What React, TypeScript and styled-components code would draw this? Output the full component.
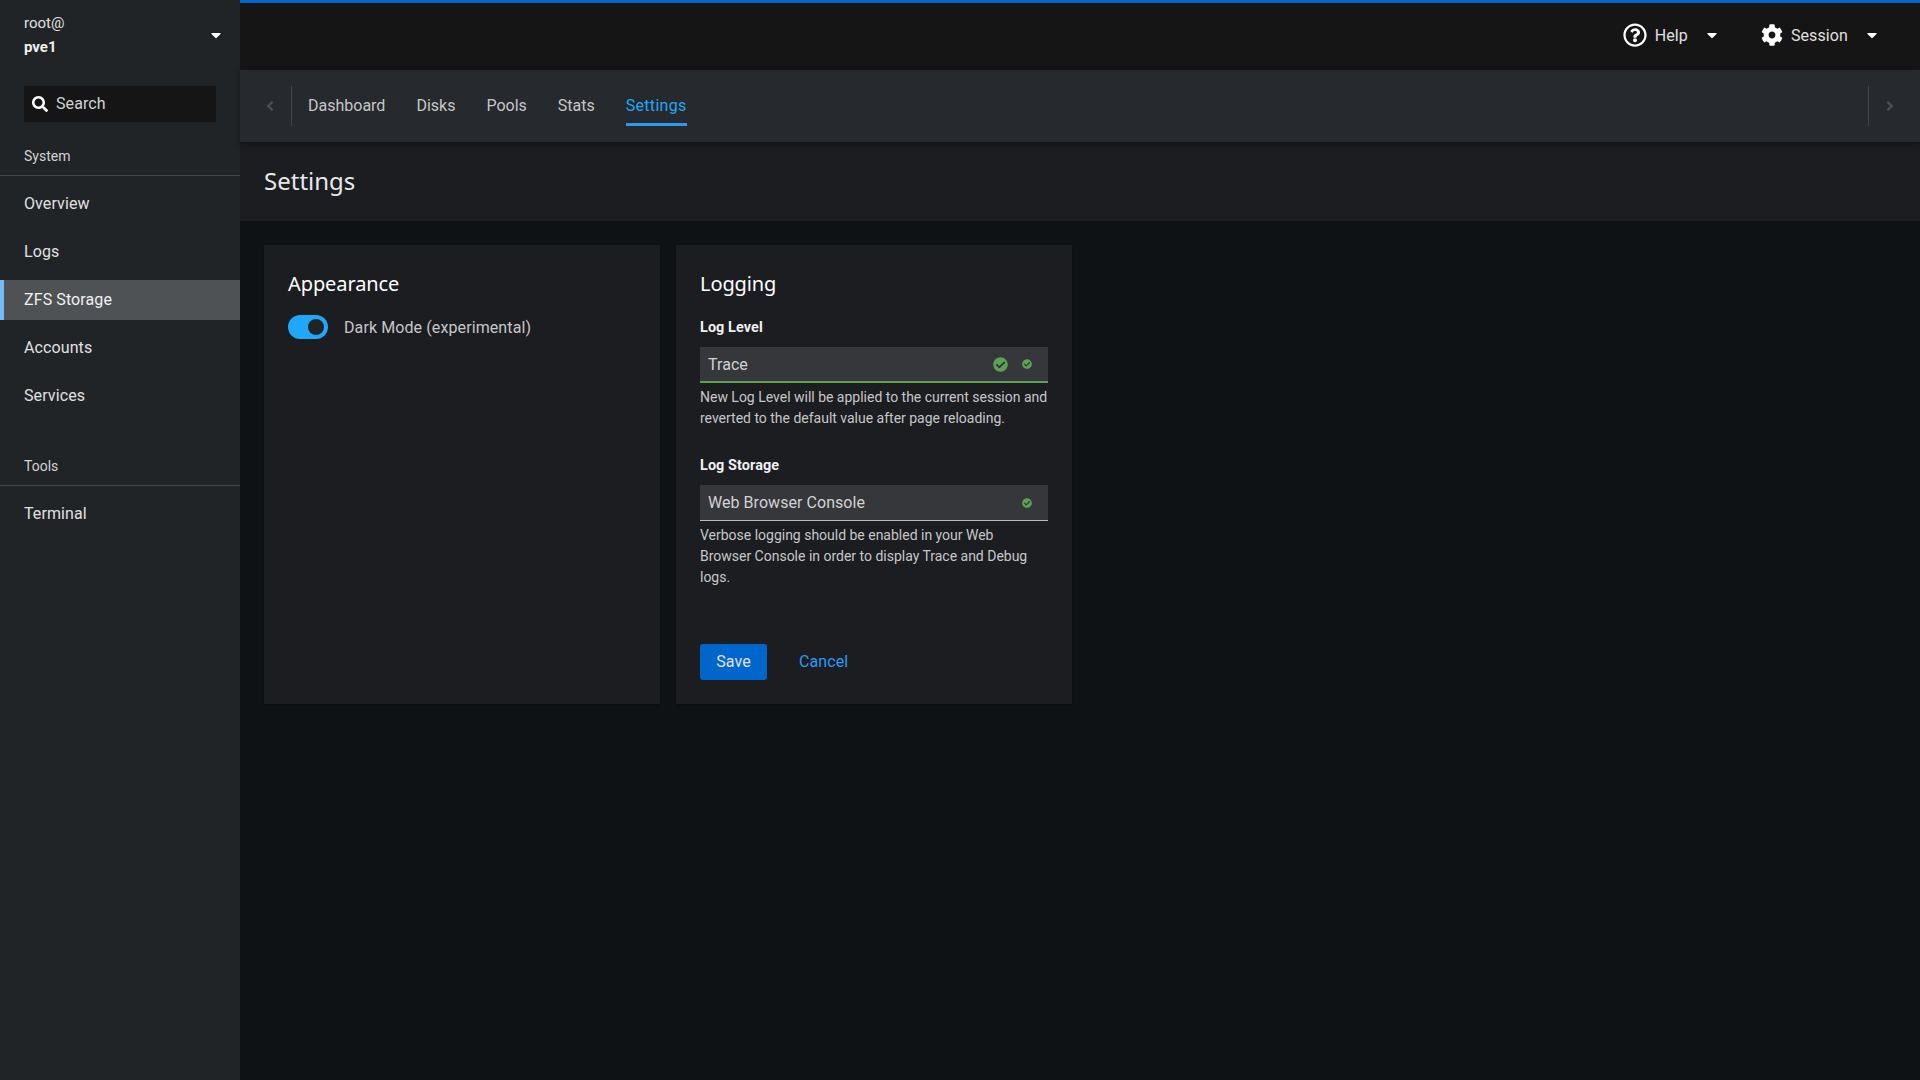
import React from "react";
import styled, { createGlobalStyle } from "styled-components";
import { FaCaretDown, FaCheckCircle, FaCog, FaRegQuestionCircle, FaSearch, FaAngleLeft, FaAngleRight } from "react-icons/fa";

const Global = createGlobalStyle`
  html, body { margin: 0; padding: 0; height: 100%; background: #0f1214; }
  * { box-sizing: border-box; }
  body { font-family: Roboto, "Noto Sans", sans-serif; font-size: 16px; color: #ccc; }
`;

const Page = styled.div`
  display: grid;
  grid-template-columns: 240px 1fr;
  width: 1920px;
  height: 1080px;
  overflow: hidden;
`;

const Sidebar = styled.aside`
  background: #212427;
  display: flex;
  flex-direction: column;
`;

const Host = styled.div`
  height: 70px;
  padding: 0 16px 0 24px;
  display: flex;
  align-items: flex-start;
  justify-content: space-between;
  color: #e0e0e0;
`;

const HostText = styled.div`
  display: flex;
  flex-direction: column;
  gap: 3px;
  padding-top: 13px;
  font-size: 15px;
  line-height: 21px;
  b { font-weight: 700; color: #f0f0f0; }
`;

const CaretBox = styled.span`
  display: inline-flex;
  color: #fff;
  font-size: 16px;
  margin-top: 27px;
`;

const Search = styled.div`
  margin: 16px 24px 0;
  height: 36px;
  background: #151515;
  display: flex;
  align-items: center;
  gap: 8px;
  padding: 0 0 1px 8px;
  font-size: 16px;
  letter-spacing: 0.1px;
  color: #d2d2d2;
  svg { color: #fff; font-size: 16px; }
`;

const SectionTitle = styled.div<{ $first?: boolean }>`
  margin-top: ${(p) => (p.$first ? "24px" : "40px")};
  padding: 0 24px;
  height: 30px;
  font-size: 14px;
  line-height: 20px;
  border-bottom: 1px solid #444548;
  color: #d2d2d2;
`;

const NavList = styled.nav`
  display: flex;
  flex-direction: column;
  gap: 8px;
  padding-top: 8px;
`;

const NavItem = styled.div<{ $active?: boolean }>`
  height: 40px;
  padding: 0 0 2px ${(p) => (p.$active ? "20px" : "24px")};
  display: flex;
  align-items: center;
  font-size: 16px;
  letter-spacing: 0.1px;
  color: ${(p) => (p.$active ? "#f0f0f0" : "#e0e0e0")};
  background: ${(p) => (p.$active ? "#4f5255" : "transparent")};
  border-left: ${(p) => (p.$active ? "4px solid #73bcf7" : "0")};
`;

const Main = styled.main`
  display: flex;
  flex-direction: column;
  min-width: 0;
`;

const Header = styled.header`
  height: 70px;
  background: #151515;
  border-top: 3px solid #06c;
  display: flex;
  justify-content: flex-end;
  align-items: center;
  padding-bottom: 3px;
  padding-right: 40px;
  gap: 41px;
`;

const HeaderMenu = styled.div`
  display: flex;
  align-items: center;
  font-size: 16px;
  letter-spacing: 0.1px;
  color: #e0e0e0;
`;

const HeaderIcon = styled.span<{ $size: number }>`
  display: inline-flex;
  color: #fff;
  font-size: ${(p) => p.$size}px;
  margin-right: 8px;
`;

const HeaderCaret = styled.span`
  display: inline-flex;
  color: #fff;
  font-size: 16px;
  margin-left: 16px;
`;

const TabBar = styled.div`
  height: 72px;
  background: #26292d;
  display: flex;
  align-items: center;
  justify-content: space-between;
  box-shadow: 0 2px 6px rgba(0, 0, 0, 0.4);
  position: relative;
  z-index: 1;
`;

const Scroll = styled.div<{ $right?: boolean }>`
  width: 52px;
  height: 40px;
  display: flex;
  align-items: center;
  justify-content: center;
  color: #4a4d50;
  font-size: 16px;
  ${(p) =>
    p.$right
      ? "border-left: 1px solid #444548; padding-right: 10px;"
      : "border-right: 1px solid #444548; padding-left: 8px;"}
`;

const Tabs = styled.div`
  flex: 1;
  display: flex;
  align-items: stretch;
  height: 40px;
  gap: 31px;
  padding-left: 16px;
`;

const Tab = styled.div<{ $active?: boolean }>`
  display: flex;
  align-items: center;
  font-size: 16px;
  letter-spacing: ${(p) => (p.$active ? "0.3px" : "0")};
  color: ${(p) => (p.$active ? "#1fa7f8" : "#c7c7c7")};
  border-bottom: 3px solid ${(p) => (p.$active ? "#2b9af3" : "transparent")};
  padding-top: 2px;
`;

const TitleBar = styled.div`
  height: 79px;
  background: #1b1d21;
  padding: 0 24px 2px;
  display: flex;
  align-items: center;
`;

const PageTitle = styled.h1`
  margin: 0;
  font-family: "Noto Sans", sans-serif;
  font-size: 24px;
  font-weight: 400;
  color: #e8e8e8;
`;

const Content = styled.div`
  flex: 1;
  background: #0f1214;
  padding: 24px;
  display: flex;
  gap: 16px;
  align-items: flex-start;
`;

const Card = styled.section`
  width: 396px;
  height: 459px;
  background: #1b1d21;
  padding: 24px;
  display: flex;
  flex-direction: column;
  box-shadow: 0 1px 2px rgba(0, 0, 0, 0.3);
`;

const CardTitle = styled.h2`
  margin: 0;
  font-family: "Noto Sans", sans-serif;
  font-size: 20px;
  font-weight: 400;
  line-height: 30px;
  letter-spacing: -0.1px;
  color: #fff;
`;

const ToggleRow = styled.div`
  margin-top: 16px;
  display: flex;
  align-items: center;
  gap: 16px;
  font-size: 16px;
  letter-spacing: 0.1px;
  color: #c7c7c7;
`;

const Toggle = styled.span`
  width: 40px;
  height: 24px;
  border-radius: 12px;
  background: #1fa7f8;
  display: flex;
  align-items: center;
  justify-content: flex-end;
  padding-right: 4px;
  &::after {
    content: "";
    width: 16px;
    height: 16px;
    border-radius: 50%;
    background: #212427;
  }
`;

const Field = styled.div<{ $gap: number }>`
  margin-top: ${(p) => p.$gap}px;
  display: flex;
  flex-direction: column;
`;

const Label = styled.div`
  font-size: 14.4px;
  font-weight: 700;
  line-height: 21px;
  letter-spacing: 0.1px;
  color: #f0f0f0;
`;

const SelectBox = styled.div<{ $ok?: boolean }>`
  margin-top: 9px;
  height: 36px;
  background: #36373b;
  border-bottom: ${(p) => (p.$ok ? "2px solid #5ba352" : "1px solid #b8bbbe")};
  display: flex;
  align-items: center;
  padding: 0 16px 0 8px;
  font-size: 16px;
  letter-spacing: 0.05px;
  color: #d2d2d2;
`;

const SelectText = styled.span`
  flex: 1;
`;

const Status = styled.span<{ $big?: boolean }>`
  display: inline-flex;
  color: #5ba352;
  font-size: ${(p) => (p.$big ? "15px" : "10px")};
  margin-right: ${(p) => (p.$big ? "14px" : "0")};
`;

const Help = styled.p`
  margin: 4px 0 0;
  font-size: 14px;
  line-height: 21px;
  letter-spacing: -0.01px;
  color: #c7c7c7;
`;

const Actions = styled.div`
  margin-top: auto;
  display: flex;
  align-items: center;
  gap: 16px;
`;

const Save = styled.button`
  height: 36px;
  width: 67px;
  border: 0;
  border-radius: 3px;
  padding: 0 0 1px;
  background: #06c;
  color: #e0e0e0;
  font: inherit;
  letter-spacing: 0.1px;
`;

const Cancel = styled.a`
  padding: 0 16px 1px;
  color: #2b9af3;
  font-size: 16px;
  letter-spacing: 0.1px;
`;

const nav1 = ["Overview", "Logs", "ZFS Storage", "Accounts", "Services"];
const tabs = ["Dashboard", "Disks", "Pools", "Stats", "Settings"];

export default function App() {
  return (
    <Page>
      <Global />
      <Sidebar>
        <Host>
          <HostText>
            <span>root@</span>
            <b>pve1</b>
          </HostText>
          <CaretBox><FaCaretDown /></CaretBox>
        </Host>
        <Search><FaSearch /> Search</Search>
        <SectionTitle $first>System</SectionTitle>
        <NavList>
          {nav1.map((n) => (
            <NavItem key={n} $active={n === "ZFS Storage"}>{n}</NavItem>
          ))}
        </NavList>
        <SectionTitle>Tools</SectionTitle>
        <NavList>
          <NavItem>Terminal</NavItem>
        </NavList>
      </Sidebar>
      <Main>
        <Header>
          <HeaderMenu>
            <HeaderIcon $size={24}><FaRegQuestionCircle /></HeaderIcon>
            Help
            <HeaderCaret><FaCaretDown /></HeaderCaret>
          </HeaderMenu>
          <HeaderMenu>
            <HeaderIcon $size={22}><FaCog /></HeaderIcon>
            Session
            <HeaderCaret><FaCaretDown /></HeaderCaret>
          </HeaderMenu>
        </Header>
        <TabBar>
          <Scroll><FaAngleLeft /></Scroll>
          <Tabs>
            {tabs.map((t) => (
              <Tab key={t} $active={t === "Settings"}>{t}</Tab>
            ))}
          </Tabs>
          <Scroll $right><FaAngleRight /></Scroll>
        </TabBar>
        <TitleBar>
          <PageTitle>Settings</PageTitle>
        </TitleBar>
        <Content>
          <Card>
            <CardTitle>Appearance</CardTitle>
            <ToggleRow>
              <Toggle />
              Dark Mode (experimental)
            </ToggleRow>
          </Card>
          <Card>
            <CardTitle>Logging</CardTitle>
            <Field $gap={18}>
              <Label>Log Level</Label>
              <SelectBox $ok>
                <SelectText>Trace</SelectText>
                <Status $big><FaCheckCircle /></Status>
                <Status><FaCheckCircle /></Status>
              </SelectBox>
              <Help>New Log Level will be applied to the current session and reverted to the default value after page reloading.</Help>
            </Field>
            <Field $gap={26}>
              <Label>Log Storage</Label>
              <SelectBox>
                <SelectText>Web Browser Console</SelectText>
                <Status><FaCheckCircle /></Status>
              </SelectBox>
              <Help>Verbose logging should be enabled in your Web Browser Console in order to display Trace and Debug logs.</Help>
            </Field>
            <Actions>
              <Save>Save</Save>
              <Cancel>Cancel</Cancel>
            </Actions>
          </Card>
        </Content>
      </Main>
    </Page>
  );
}
